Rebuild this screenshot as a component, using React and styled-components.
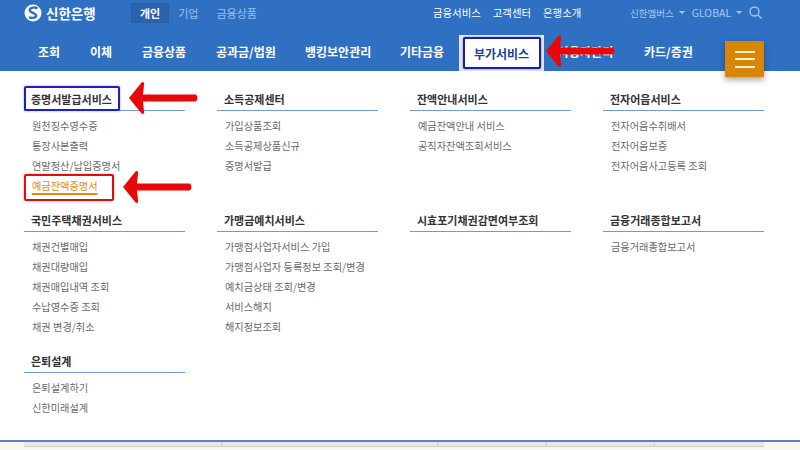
import React from 'react';
import styled, { createGlobalStyle } from 'styled-components';

const GlobalStyle = createGlobalStyle`
  html, body {
    margin: 0;
    background: #fff;
    font-family: "Noto Sans CJK KR", "Noto Sans", sans-serif;
  }
  ul { list-style: none; margin: 0; padding: 0; }
`;

const Page = styled.div`
  position: relative;
  width: 800px;
  height: 450px;
  overflow: hidden;
  background: #fff;
`;

const Header = styled.header`
  height: 71px;
  background: #2f70c3;
`;

const TopBar = styled.div`
  display: flex;
  align-items: center;
  height: 25px;
  padding-left: 24px;
`;

const Logo = styled.div`
  display: flex;
  align-items: center;
  gap: 4px;
  width: 107px;
  color: #fff;
  font-size: 13.5px;
  font-weight: 700;
`;

const SiteTabs = styled.div`
  display: flex;
  align-items: center;
  width: 302px;
`;

const SiteTab = styled.span`
  padding: 1px 8px;
  font-size: 11px;
  font-weight: ${p => (p.$active ? 700 : 400)};
  color: ${p => (p.$active ? '#fff' : '#9cc0ea')};
  background: ${p => (p.$active ? '#2a62ab' : 'transparent')};
  border: 1px solid ${p => (p.$active ? '#2b5f9f' : 'transparent')};
`;

const UtilLinks = styled.div`
  display: flex;
  gap: 12px;
  width: 197px;
  color: #fff;
  font-size: 10.4px;
`;

const Extras = styled.div`
  display: flex;
  align-items: center;
  color: #a9c9ee;
  font-size: 9.5px;
  white-space: nowrap;
`;

const GlobalLabel = styled.span`
  font-size: 10.5px;
`;

const Caret = styled.span`
  width: 0;
  height: 0;
  margin: 0 7px 0 5px;
  border: 3px solid transparent;
  border-top: 3px solid #a9c9ee;
  border-bottom: 0;
`;

const NavBar = styled.nav`
  display: flex;
  align-items: flex-end;
  height: 46px;
  padding-left: 38px;
`;

const NavItem = styled.a`
  align-self: center;
  width: ${p => p.$width}px;
  margin-top: 7px;
  color: #fff;
  font-size: 12px;
  font-weight: 700;
  white-space: nowrap;
`;

const ActiveTab = styled.div`
  display: flex;
  justify-content: center;
  align-items: center;
  box-sizing: border-box;
  width: 85px;
  height: 36px;
  margin-right: 14px;
  background: #dfe9f5;
`;

const ActiveNavItem = styled.a`
  display: flex;
  justify-content: center;
  align-items: center;
  box-sizing: border-box;
  width: 78px;
  height: 32px;
  color: #1f3f8f;
  background: #fff;
  border: 2px solid #1c1ca8;
  border-radius: 2px;
  box-shadow: 0 0 2px rgba(28, 28, 168, 0.6);
  font-size: 12px;
  font-weight: 700;
`;

const MenuButton = styled.button`
  position: absolute;
  left: 725px;
  top: 41px;
  display: flex;
  flex-direction: column;
  justify-content: center;
  gap: 5.5px;
  width: 39px;
  height: 36px;
  padding: 0 9.5px;
  border: 0;
  background: #da8505;
  box-shadow: 0 3px 6px rgba(0, 0, 0, 0.35);
  span {
    height: 2px;
    background: #fff3c9;
  }
`;

const MenuGrid = styled.main`
  display: grid;
  grid-template-columns: repeat(4, 161px);
  column-gap: 32px;
  row-gap: 11px;
  padding: 15px 0 0 24px;
`;

const SectionTitle = styled.h3`
  position: relative;
  height: 24px;
  margin: 0;
  padding: 0 0 0 7px;
  border-bottom: 1px solid #6f9bd0;
  color: #333;
  font-size: 11px;
  font-weight: 700;
  line-height: 26px;
  white-space: nowrap;
`;

const TitleMark = styled.span`
  position: absolute;
  left: 0;
  top: 0;
  box-sizing: border-box;
  width: 96px;
  height: 25px;
  padding-left: 5px;
  background: #fff;
  border: 2px solid #2020c0;
  border-radius: 2px;
  box-shadow: 0 0 2px rgba(32, 32, 192, 0.5);
  line-height: 22px;
`;

const Links = styled.ul`
  padding: 5px 0 0 8px;
`;

const LinkRow = styled.li`
  height: 20px;
  color: #6a6a6a;
  font-size: 10.2px;
  line-height: 20px;
  white-space: nowrap;
`;

const MarkedLink = styled.span`
  position: relative;
  display: inline-block;
  color: #dd8a1a;
  text-decoration: underline;
  text-decoration-thickness: 2px;
  text-underline-offset: 3px;
  &::after {
    content: '';
    position: absolute;
    left: -8px;
    top: -2px;
    box-sizing: border-box;
    width: 90px;
    height: 27px;
    border: 2px solid #d81010;
    border-radius: 2px;
    box-shadow: 0 0 2px rgba(216, 16, 16, 0.5);
  }
`;

const Footer = styled.footer`
  position: absolute;
  left: 0;
  right: 0;
  top: 440px;
  box-sizing: border-box;
  height: 10px;
  padding: 0 36px 0 24px;
  border-top: 2px solid #4f86c6;
  background: #f6f7f5;
`;

const FooterCells = styled.div`
  display: grid;
  grid-template-columns: 198px 216px 109px 108px 109px;
  height: 4px;
  border-bottom: 1px solid #cfcfd2;
  background: #e8e8ea;
`;

const FooterCell = styled.div`
  border-right: 1px solid #d0d0d4;
  &:last-child { border-right: 0; }
`;

const ArrowSvg = styled.svg`
  position: absolute;
  left: ${p => p.$x}px;
  top: ${p => p.$y}px;
`;

function Arrow({ x, y, width }) {
  return (
    <ArrowSvg $x={x} $y={y} width={width} height={32} viewBox={`0 0 ${width} 32`}>
      <path
        d={`M0 16 L13 0 Q16 0 15 3 L14 12.5 L${width - 3} 12.5 Q${width} 16 ${width - 3} 19.5 L14 19.5 L15 29 Q16 32 13 32 Z`}
        fill="#e80808"
      />
    </ArrowSvg>
  );
}

const navItems = [
  ['조회', 52],
  ['이체', 52],
  ['금융상품', 74],
  ['공과금/법원', 89],
  ['뱅킹보안관리', 95],
  ['기타금융', 59],
];

const sections = [
  { title: '증명서발급서비스', marked: true, links: ['원천징수영수증', '통장사본출력', '연말정산/납입증명서', '예금잔액증명서'] },
  { title: '소득공제센터', links: ['가입상품조회', '소득공제상품신규', '증명서발급'] },
  { title: '잔액안내서비스', links: ['예금잔액안내 서비스', '공직자잔액조회서비스'] },
  { title: '전자어음서비스', links: ['전자어음수취배서', '전자어음보증', '전자어음사고등록 조회'] },
  { title: '국민주택채권서비스', links: ['채권건별매입', '채권대량매입', '채권매입내역 조회', '수납영수증 조회', '채권 변경/취소'] },
  { title: '가맹금예치서비스', links: ['가맹점사업자서비스 가입', '가맹점사업자 등록정보 조회/변경', '예치금상태 조회/변경', '서비스해지', '해지정보조회'] },
  { title: '시효포기채권감면여부조회', links: [] },
  { title: '금융거래종합보고서', links: ['금융거래종합보고서'] },
  { title: '은퇴설계', links: ['은퇴설계하기', '신한미래설계'] },
];

function BankLogo() {
  return (
    <svg width="18" height="18" viewBox="0 0 18 18">
      <circle cx="9" cy="9" r="8.5" fill="#fff" />
      <path
        d="M13.5 4.4C11.2 2.8 6.3 3.3 5.7 5.9c-.5 2.4 6.2 3.2 6.5 5.6.2 2-3.3 3-7.2 1.9"
        fill="none"
        stroke="#2f70c3"
        strokeWidth="2.4"
      />
    </svg>
  );
}

export default function App() {
  return (
    <Page>
      <GlobalStyle />
      <Header>
        <TopBar>
          <Logo>
            <BankLogo />
            신한은행
          </Logo>
          <SiteTabs>
            <SiteTab $active>개인</SiteTab>
            <SiteTab>기업</SiteTab>
            <SiteTab>금융상품</SiteTab>
          </SiteTabs>
          <UtilLinks>
            <span>금융서비스</span>
            <span>고객센터</span>
            <span>은행소개</span>
          </UtilLinks>
          <Extras>
            <span>신한멤버스</span>
            <Caret />
            <GlobalLabel>GLOBAL</GlobalLabel>
            <Caret />
            <svg width="13" height="13" viewBox="0 0 13 13" fill="none" stroke="#a9c9ee" strokeWidth="1.3">
              <circle cx="5.5" cy="5.5" r="4.5" />
              <path d="M9 9l3.5 3.5" />
            </svg>
          </Extras>
        </TopBar>
        <NavBar>
          {navItems.map(([label, width]) => (
            <NavItem key={label} $width={width}>{label}</NavItem>
          ))}
          <ActiveTab>
            <ActiveNavItem>부가서비스</ActiveNavItem>
          </ActiveTab>
          <NavItem $width={86}>사용자관리</NavItem>
          <NavItem $width={60}>카드/증권</NavItem>
        </NavBar>
      </Header>
      <MenuButton aria-label="menu">
        <span />
        <span />
        <span />
      </MenuButton>
      <MenuGrid>
        {sections.map(section => (
          <section key={section.title}>
            <SectionTitle>
              {section.marked ? <TitleMark>{section.title}</TitleMark> : section.title}
            </SectionTitle>
            <Links>
              {section.links.map(link => (
                <LinkRow key={link}>
                  {link === '예금잔액증명서' ? <MarkedLink>{link}</MarkedLink> : link}
                </LinkRow>
              ))}
            </Links>
          </section>
        ))}
      </MenuGrid>
      <Footer>
        <FooterCells>
          {[0, 1, 2, 3, 4].map(i => <FooterCell key={i} />)}
        </FooterCells>
      </Footer>
      <Arrow x={546} y={35} width={70} />
      <Arrow x={129} y={82} width={70} />
      <Arrow x={123} y={171} width={70} />
    </Page>
  );
}
